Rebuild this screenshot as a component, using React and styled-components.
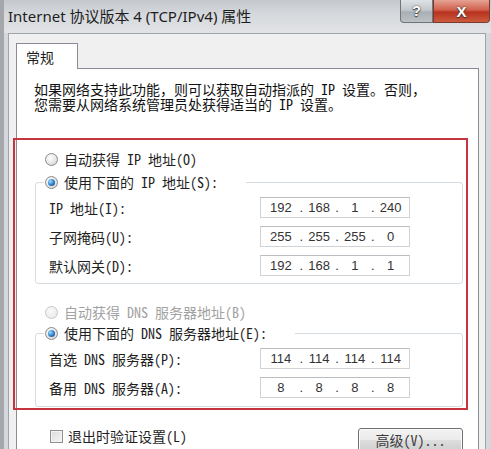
import styled, { createGlobalStyle } from 'styled-components'

const GlobalStyle = createGlobalStyle`
  html, body {
    margin: 0;
    padding: 0;
    background: #d4d7db;
  }
  body {
    font-family: "Noto Sans Mono CJK SC", "Noto Sans CJK SC", sans-serif;
  }
`

const Window = styled.div`
  width: 491px;
  height: 449px;
  overflow: hidden;
  display: flex;
  flex-direction: column;
  box-sizing: border-box;
  background: #d4d7db;
  border-left: 4px solid #a4a8ad;
`

const TitleBar = styled.div`
  height: 33px;
  flex: none;
  display: flex;
  justify-content: space-between;
  align-items: flex-start;
  margin-left: -4px;
  background: linear-gradient(#c4c8cd, #d6d9dd 45%, #e1e3e6);
`

const Title = styled.div`
  padding-left: 8px;
  line-height: 32px;
  font-family: "Noto Sans", "Noto Sans CJK SC", sans-serif;
  font-size: 15px;
  color: #1e1e1e;
`

const Caption = styled.div`
  display: flex;
  margin-right: 1px;
`

const CaptionButton = styled.div`
  width: ${p => (p.$close ? 57 : 33)}px;
  height: 23px;
  box-sizing: border-box;
  display: flex;
  align-items: center;
  justify-content: center;
  border: 1px solid ${p => (p.$close ? '#7a3a30' : '#6f757b')};
  border-top: none;
  border-radius: ${p => (p.$close ? '0 0 4px 0' : '0 0 0 4px')};
  background: ${p =>
    p.$close
      ? 'linear-gradient(#e6a394, #d0604c 45%, #b8321f 55%, #cc5a3e)'
      : 'linear-gradient(#dfe2e6, #c3c8cd 45%, #a9afb6 55%, #bcc1c6)'};
  color: #fff;
  font-family: "Liberation Sans", sans-serif;
  font-weight: bold;
  font-size: ${p => (p.$close ? 15 : 14)}px;
  text-shadow: 0 0 2px #3a3a3a, 0 1px 1px #333;
`

const Client = styled.div`
  flex: 1;
  min-height: 0;
  margin: 0 5px 0 4px;
  display: flex;
  flex-direction: column;
  border: 1px solid #9ea3a8;
  border-bottom: none;
  background: #f0f0f0;
  padding: 9px 6px 0 7px;
`

const Tab = styled.div`
  width: 62px;
  height: 26px;
  box-sizing: border-box;
  border: 1px solid #898c95;
  border-bottom: none;
  background: #fff;
  margin-bottom: -1px;
  position: relative;
  z-index: 1;
  padding-left: 9px;
  font-family: "Noto Sans CJK SC", sans-serif;
  font-size: 14px;
  line-height: 26px;
  color: #1e1e1e;
`

const Pane = styled.div`
  flex: 1;
  border: 1px solid #898c95;
  border-bottom: none;
  background: #fff;
  padding: 13px 10px 0 17px;
  font-size: 14px;
  color: #1f1f1f;
`

const Intro = styled.p`
  margin: 0;
  line-height: 15px;
  white-space: nowrap;
  color: #111;
`

const Highlight = styled.div`
  margin: 26px 0 0 -21px;
  border: 2px solid #c53540;
  padding: 10px 3px 1px 20px;
`

const Option = styled.div`
  display: flex;
  align-items: center;
  gap: 6px;
  height: 18px;
  margin-left: ${p => (p.$inLegend ? 0 : 10)}px;
  margin-top: ${p => p.$top || 0}px;
  color: ${p => (p.$disabled ? '#a2a2a2' : '#1f1f1f')};
  white-space: nowrap;
`

const Radio = styled.span`
  width: 13px;
  height: 13px;
  box-sizing: border-box;
  border-radius: 50%;
  flex: none;
  position: relative;
  border: 1px solid ${p => (p.$disabled ? '#c8c8c8' : '#8b8b8b')};
  background: ${p =>
    p.$disabled
      ? 'radial-gradient(circle at 40% 35%, #fafafa, #e6e6e6)'
      : 'radial-gradient(circle at 40% 35%, #ffffff, #e3e3e3 60%, #c9c9c9)'};

  &::after {
    content: '';
    display: ${p => (p.$checked ? 'block' : 'none')};
    position: absolute;
    inset: 2px;
    border-radius: 50%;
    background: radial-gradient(circle at 35% 35%, #9fdcff, #2a7cc4 55%, #0e3f78);
  }
`

const Group = styled.fieldset`
  margin: ${p => p.$top}px 0 0 0;
  border: 1px solid #d5dce2;
  border-radius: 3px;
  padding: 6px 0 ${p => p.$bottom}px 8px;
  min-width: 0;
`

const Legend = styled.legend`
  padding: 0 28px 0 1px;
  height: 18px;
`

const Fields = styled.div`
  display: grid;
  grid-template-columns: 211px 150px;
  row-gap: 8px;
  margin-left: 5px;
  align-items: center;
`

const Label = styled.span`
  white-space: nowrap;
`

const IpBox = styled.div`
  width: 150px;
  height: 21px;
  box-sizing: border-box;
  border: 1px solid #cfd2d6;
  border-top-color: #b9bcc1;
  background: #fff;
  display: flex;
  align-items: center;
  padding: 0 3px 0 2px;
  font-family: "Liberation Sans", sans-serif;
  font-size: 13px;
  color: #333;
`

const Octet = styled.span`
  flex: 1;
  display: flex;
  align-items: center;
`

const Dot = styled.span`
  width: 5px;
  text-align: center;
`

const Num = styled.span`
  flex: 1;
  text-align: center;
`

const Footer = styled.div`
  display: flex;
  justify-content: space-between;
  align-items: flex-start;
  margin: 18px 5px 0 16px;
`

const Check = styled.label`
  display: flex;
  align-items: center;
  gap: 5px;
  height: 16px;
  white-space: nowrap;
`

const Box = styled.span`
  width: 13px;
  height: 13px;
  box-sizing: border-box;
  border: 1px solid #8e8f8f;
  background: linear-gradient(135deg, #dcdcdc, #f6f6f6);
  box-shadow: inset 0 0 0 1px #f4f4f4;
`

const Button = styled.div`
  width: 105px;
  height: 24px;
  box-sizing: border-box;
  border: 1px solid #707070;
  border-radius: 3px;
  background: linear-gradient(#f3f3f3, #ebebeb 48%, #dddddd 52%, #cfcfcf);
  box-shadow: inset 0 0 0 1px #fbfbfb;
  display: flex;
  align-items: center;
  justify-content: center;
  color: #3c3c3c;
  white-space: nowrap;
`

const IpField = ({ value }) => (
  <IpBox>
    {value.split('.').map((p, i) => (
      <Octet key={i}>
        {i > 0 && <Dot>.</Dot>}
        <Num>{p}</Num>
      </Octet>
    ))}
  </IpBox>
)

const App = () => {
  return (
    <>
      <GlobalStyle />
      <Window>
        <TitleBar>
          <Title>Internet 协议版本 4 (TCP/IPv4) 属性</Title>
          <Caption>
            <CaptionButton>?</CaptionButton>
            <CaptionButton $close>X</CaptionButton>
          </Caption>
        </TitleBar>
        <Client>
          <Tab>常规</Tab>
          <Pane>
            <Intro>
              如果网络支持此功能，则可以获取自动指派的 IP 设置。否则，
              <br />
              您需要从网络系统管理员处获得适当的 IP 设置。
            </Intro>
            <Highlight>
              <Option>
                <Radio />
                自动获得 IP 地址(O)
              </Option>
              <Group $top={5} $bottom={7}>
                <Legend>
                  <Option $inLegend>
                    <Radio $checked />
                    使用下面的 IP 地址(S):
                  </Option>
                </Legend>
                <Fields>
                  <Label>IP 地址(I):</Label>
                  <IpField value="192.168.1.240" />
                  <Label>子网掩码(U):</Label>
                  <IpField value="255.255.255.0" />
                  <Label>默认网关(D):</Label>
                  <IpField value="192.168.1.1" />
                </Fields>
              </Group>
              <Option $disabled $top={19}>
                <Radio $disabled />
                自动获得 DNS 服务器地址(B)
              </Option>
              <Group $top={3} $bottom={8}>
                <Legend>
                  <Option $inLegend>
                    <Radio $checked />
                    使用下面的 DNS 服务器地址(E):
                  </Option>
                </Legend>
                <Fields>
                  <Label>首选 DNS 服务器(P):</Label>
                  <IpField value="114.114.114.114" />
                  <Label>备用 DNS 服务器(A):</Label>
                  <IpField value="8.8.8.8" />
                </Fields>
              </Group>
            </Highlight>
            <Footer>
              <Check>
                <Box />
                退出时验证设置(L)
              </Check>
              <Button>高级(V)...</Button>
            </Footer>
          </Pane>
        </Client>
      </Window>
    </>
  )
}

export default App
